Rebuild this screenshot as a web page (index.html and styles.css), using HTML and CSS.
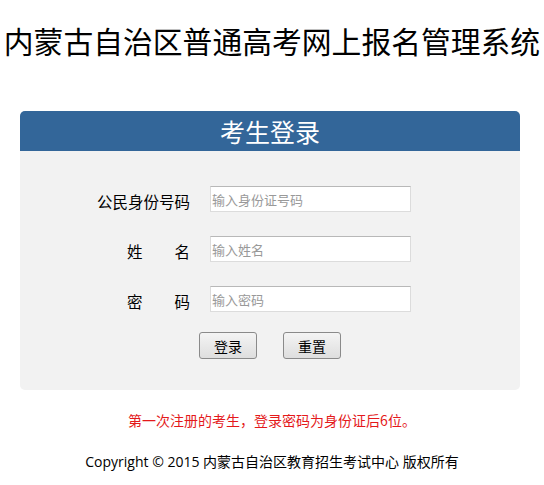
FILE: index.html
```html
<!DOCTYPE html>
<html>
<head>
<meta charset="utf-8">
<link rel="stylesheet" href="styles.css">
</head>
<body>
<h1 class="title">内蒙古自治区普通高考网上报名管理系统</h1>
<div class="panel">
  <div class="panel-head">考生登录</div>
  <div class="panel-body">
    <div class="row">
      <label class="lbl">公民身份号码</label>
      <input class="inp" type="text" placeholder="输入身份证号码">
    </div>
    <div class="row">
      <label class="lbl spaced"><span>姓</span><span>名</span></label>
      <input class="inp" type="text" placeholder="输入姓名">
    </div>
    <div class="row">
      <label class="lbl spaced"><span>密</span><span>码</span></label>
      <input class="inp" type="password" placeholder="输入密码">
    </div>
    <div class="btns">
      <button class="btn">登录</button>
      <button class="btn">重置</button>
    </div>
  </div>
</div>
<p class="note">第一次注册的考生，登录密码为身份证后6位。</p>
<p class="copy">Copyright © 2015 内蒙古自治区教育招生考试中心 版权所有</p>
</body>
</html>
```
FILE: styles.css
```css
* { box-sizing: border-box; }
body {
  margin: 0;
  font-family: "Noto Sans CJK SC", "Liberation Sans", sans-serif;
  background: #fff;
  color: #000;
}
.title {
  margin: 0;
  padding-top: 20px;
  height: 111px;
  text-align: center;
  font-size: 29.8px;
  font-weight: normal;
  line-height: 40px;
  white-space: nowrap;
}
.panel {
  width: 500px;
  margin-left: 20px;
  border-radius: 5px;
  overflow: hidden;
  background: #f2f2f2;
}
.panel-head {
  height: 40px;
  background: #336699;
  color: #fff;
  text-align: center;
  font-size: 25px;
  line-height: 40px;
}
.panel-body {
  height: 239px;
  padding-top: 35px;
}
.row {
  display: flex;
  align-items: center;
  height: 26px;
  margin-bottom: 24px;
}
.lbl {
  width: 170px;
  text-align: right;
  font-size: 15.5px;
  line-height: 26px;
  padding-top: 4px;
  white-space: nowrap;
}
.lbl.spaced {
  display: flex;
  justify-content: space-between;
  width: 63px;
  margin-left: 107px;
}
.inp {
  margin-left: 20px;
  width: 201px;
  height: 26px;
  border: 1px solid #dcdcdc;
  border-top-color: #b8b8b8;
  background: #fff;
  padding: 0 1px;
  font-family: "Noto Sans CJK SC", sans-serif;
  font-size: 13px;
  outline: none;
}
.inp::placeholder { color: #999; }
.btns {
  display: flex;
  gap: 26px;
  margin-left: 179px;
  margin-top: -4px;
}
.btn {
  width: 58px;
  height: 27px;
  border: 1px solid #8a8a8a;
  border-radius: 3px;
  background: linear-gradient(#f4f4f4, #dedede);
  font-family: "Noto Sans CJK SC", sans-serif;
  font-size: 14px;
  color: #000;
  padding: 0;
}
.note {
  margin: 19px 0 0;
  text-align: center;
  color: #e4191b;
  font-size: 14px;
  line-height: 22px;
}
.copy {
  margin: 20px 0 0;
  text-align: center;
  font-family: "Open Sans", "Noto Sans CJK SC", sans-serif;
  font-size: 14px;
  line-height: 22px;
}
```
